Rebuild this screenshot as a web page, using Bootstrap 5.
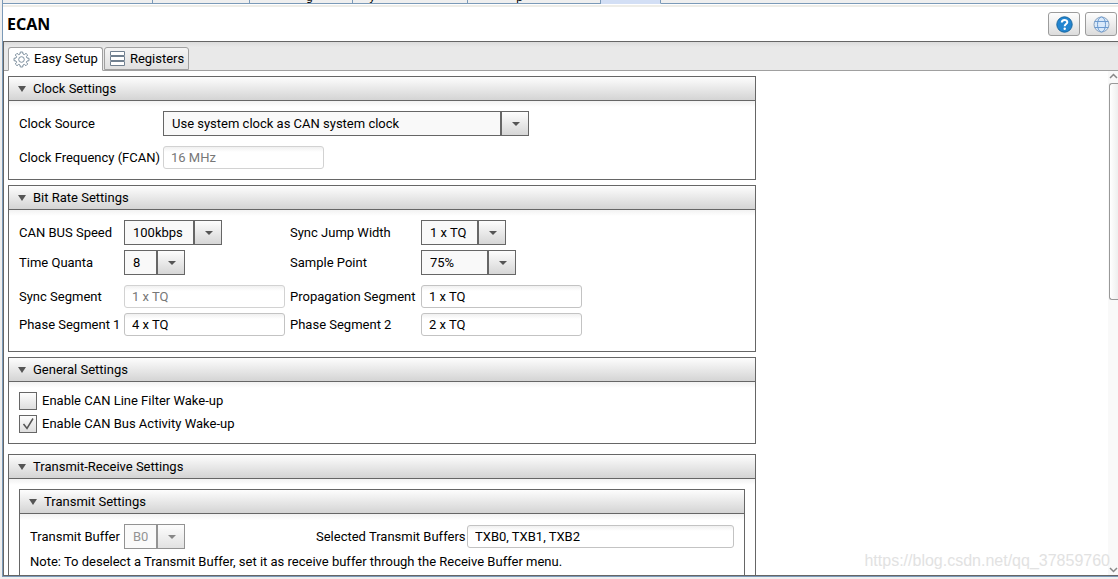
<!DOCTYPE html>
<html lang="en">
<head>
<meta charset="utf-8">
<meta name="viewport" content="width=device-width, initial-scale=1">
<title>ECAN</title>
<link href="https://cdn.jsdelivr.net/npm/bootstrap@5.3.0/dist/css/bootstrap.min.css" rel="stylesheet">
<style>
  :root { --line: #666; --frame: #7b9ab8; --soft: #c3c3c3; }
  body { font-family: Roboto, "Noto Sans", sans-serif; font-size: 13px; line-height: 18px; color: #000; background: #efefef; }
  .frame { border-left: 1px solid var(--frame); border-bottom: 1px solid var(--frame); margin: 0 0 2px 2px; }

  /* bottom edge of the editor tabs */
  .doc-tabs { height: 4px; background: #efefef; }
  .doc-tab { border-right: 1px solid var(--frame); border-bottom: 1px solid var(--frame); font: 11px/11px "DejaVu Sans", sans-serif; }
  .doc-tab.current { background: #d3dff5; border-bottom-color: #d3dff5; }
  .doc-edge { height: 3px; background: #eeede8; border-top: 1px solid #fff; }

  .title-bar { height: 34px; }
  .title-bar h1 { font: bold 16px/20px "Noto Sans", sans-serif; }
  .tool-btns { gap: 5px; padding-right: 1px; }
  .tool-btn { width: 32px; height: 24px; border: 1px solid #9c9c9c; border-radius: 3px; background: linear-gradient(#fefefe, #dcdcdc); }

  .view { border-left: 1px solid var(--line); border-top: 1px solid var(--line); border-bottom: 1px solid var(--line); }
  .tab-strip { height: 29px; padding-left: 4px; gap: 1px; background: linear-gradient(#dcdcdc, #e9e9e9 5px); border-bottom: 1px solid #a0a0a0; }
  .tab-strip .nav-link { display: flex; align-items: center; gap: 4px; height: 23px; padding: 0 4px; color: #000; border: 1px solid #a0a0a0; border-radius: 3px 3px 0 0; background: linear-gradient(#f4f4f4, #e0e0e0); }
  .tab-strip .nav-link.active { height: 24px; margin-bottom: -1px; border-bottom-color: #fff; background: #fff; }

  .panes { padding: 5px 4px 0; }
  .pane { border: 1px solid var(--line); background: #fff; }
  .pane-head { height: 24px; padding: 0 9px; border: 0; border-bottom: 1px solid var(--line); background: linear-gradient(#fdfdfd, #d4d4d4); text-align: left; color: #000; }
  .pane-head svg { margin-right: 7px; }
  .pane-body { padding: 10px; background: linear-gradient(#f2f2f2, #fff 6px); }
  .settings { max-width: 748px; }
  .gap-above { margin-top: 5px; }
  .gap-above-lg { margin-top: 10px; }

  .fields { display: grid; align-items: center; white-space: nowrap; }
  .fields-clock { grid-template-columns: 144px 1fr; row-gap: 10px; }
  .fields-rate { grid-template-columns: 105px 166px 131px 1fr; row-gap: 5px; }
  .fields-rate + .fields-rate { margin: 10px 0 5px; }
  .fields-buffer { grid-template-columns: 94px 192px 151px 1fr; }

  .pick { appearance: none; height: 25px; padding: 0 36px 0 8px; border: 1px solid var(--line); border-radius: 0; color: #000; font: inherit;
    background:
      url("data:image/svg+xml,%3Csvg xmlns='http://www.w3.org/2000/svg' width='8' height='4'%3E%3Cpath d='M0 0h8L4 4z' fill='%23555'/%3E%3C/svg%3E") no-repeat right 8px center,
      linear-gradient(#fdfdfd, #d6d6d6) no-repeat right / 26px 100%,
      linear-gradient(var(--line), var(--line)) no-repeat right / 28px 100%,
      #f9f9f9; }
  .pick:disabled { opacity: .7; color: #666; }
  .pick-xl { width: 366px; } .pick-lg { width: 98px; } .pick-md { width: 95px; } .pick-sm { width: 85px; } .pick-xs { width: 61px; }

  .entry { width: 161px; height: 23px; padding: 0 7px; border: 1px solid var(--soft); border-radius: 3px; color: #000; font: inherit; background: linear-gradient(#f0f0f0, #fff 5px); }
  .entry:disabled { color: #777; border-color: #d2d2d2; }

  .checks { display: grid; row-gap: 5px; }
  .checks label { display: flex; align-items: center; gap: 5px; }
  .tick { appearance: none; flex: none; width: 18px; height: 18px; margin: 0; border: 1px solid var(--line); background: linear-gradient(#fdfdfd, #dedede); }
  .tick:checked { background: url("data:image/svg+xml,%3Csvg xmlns='http://www.w3.org/2000/svg' width='16' height='16'%3E%3Cpath d='M3.500 8l3.500 4.500 6-10' fill='none' stroke='%23555' stroke-width='1.5'/%3E%3C/svg%3E") center no-repeat, linear-gradient(#fdfdfd, #dedede); }

  .scroller { width: 10px; background: #f9f9f9; }
  .scroller-thumb { height: 217px; margin-left: 1px; border: 1px solid #999; border-right: 0; border-radius: 3px 0 0 3px; background: linear-gradient(90deg, #fff, #eee); }
  .watermark { right: 8px; bottom: 5px; font: 16px/18px "Liberation Sans", sans-serif; color: #e2e2e2; }
</style>
</head>
<body>
<div class="vh-100 d-flex flex-column overflow-hidden">
  <div class="frame flex-grow-1 d-flex flex-column bg-white overflow-hidden">
    <div class="doc-tabs d-flex flex-shrink-0 overflow-hidden">
      <div class="doc-tab" style="width:150px"></div>
      <div class="doc-tab" style="width:97px"></div>
      <div class="doc-tab d-flex align-items-end ps-5" style="width:103px"><span class="ps-2">g</span></div>
      <div class="doc-tab d-flex align-items-end ps-3" style="width:115px">y</div>
      <div class="doc-tab d-flex align-items-end ps-5" style="width:133px">p</div>
      <div class="doc-tab current" style="width:60px"></div>
      <div class="doc-tab flex-grow-1 border-end-0"></div>
    </div>
    <div class="doc-edge flex-shrink-0"></div>

    <header class="title-bar d-flex align-items-center flex-shrink-0 ps-1">
      <h1 class="mb-0 me-auto">ECAN</h1>
      <div class="tool-btns d-flex">
        <button class="tool-btn d-flex align-items-center justify-content-center p-0" type="button" aria-label="Help">
          <svg width="17" height="17" viewBox="0 0 17 17"><circle cx="8.5" cy="8.5" r="7.7" fill="#2385d0" stroke="#17669f"/><path d="M5.8 6.5C5.8 3 11.3 3.200 11.300 6.200C11.300 8 8.700 8.200 8.700 10.200" fill="none" stroke="#fff" stroke-width="2"/><circle cx="8.700" cy="12.700" r="1.200" fill="#fff"/></svg>
        </button>
        <button class="tool-btn d-flex align-items-center justify-content-center p-0" type="button" aria-label="Web">
          <svg width="17" height="17" viewBox="0 0 17 17" fill="#d9e9fa" stroke="#6d9bd0"><circle cx="8.500" cy="8.500" r="7.500" stroke="#8ba3be"/><ellipse cx="8.500" cy="8.500" rx="4" ry="7.500"/><path d="M1.500 5.500h14M1.500 11.500h14" fill="none"/></svg>
        </button>
      </div>
    </header>

    <main class="view flex-grow-1 d-flex flex-column position-relative overflow-hidden">
      <nav class="tab-strip nav d-flex flex-nowrap align-items-end flex-shrink-0">
        <a class="nav-link active" href="#easy">
          <svg width="17" height="17" viewBox="0 0 17 17" fill="none" stroke="#7d8f9e"><path d="M7.300 1h2.400l.3 2 1.300.6L13 2.400 14.700 4l-1.300 1.700.6 1.300 2 .3v2.400l-2 .3-.6 1.300 1.300 1.700-1.700 1.700-1.700-1.300-1.300.6-.3 2H7.300l-.3-2-1.300-.6L4 14.700 2.300 13l1.300-1.700L3 10l-2-.3V7.300L3 7l.6-1.300L2.300 4 4 2.300l1.700 1.300L7 3z" stroke-linejoin="round"/><circle cx="8.500" cy="8.500" r="2.800"/></svg>
          Easy Setup
        </a>
        <a class="nav-link" href="#registers">
          <svg width="17" height="16" viewBox="-1 0 17 16" fill="#fff" stroke="#708090"><path d="M.5.5h14v4H.5zM.5 5.500h14v4H.5zM.5 10.500h14v4H.5z"/></svg>
          Registers
        </a>
      </nav>

      <div class="flex-grow-1 d-flex overflow-hidden">
        <div class="panes flex-grow-1 overflow-hidden" id="easy">
          <div class="settings">
            <section class="pane">
              <button type="button" class="pane-head w-100 d-flex align-items-center"><svg width="8" height="7"><path d="M0 1h8L4 7z" fill="#555"/></svg>Clock Settings</button>
              <div class="pane-body fields fields-clock">
                <label for="src">Clock Source</label>
                <select id="src" class="pick pick-xl"><option>Use system clock as CAN system clock</option></select>
                <label for="fcan">Clock Frequency (FCAN)</label>
                <input id="fcan" class="entry" value="16 MHz" disabled>
              </div>
            </section>

            <section class="pane gap-above">
              <button type="button" class="pane-head w-100 d-flex align-items-center"><svg width="8" height="7"><path d="M0 1h8L4 7z" fill="#555"/></svg>Bit Rate Settings</button>
              <div class="pane-body">
                <div class="fields fields-rate">
                  <label for="speed">CAN BUS Speed</label>
                  <select id="speed" class="pick pick-lg"><option>100kbps</option></select>
                  <label for="jump">Sync Jump Width</label>
                  <select id="jump" class="pick pick-sm"><option>1 x TQ</option></select>
                  <label for="quanta">Time Quanta</label>
                  <select id="quanta" class="pick pick-xs"><option>8</option></select>
                  <label for="sample">Sample Point</label>
                  <select id="sample" class="pick pick-md"><option>75%</option></select>
                </div>
                <div class="fields fields-rate">
                  <label for="sync">Sync Segment</label>
                  <input id="sync" class="entry" value="1 x TQ" disabled>
                  <label for="prop">Propagation Segment</label>
                  <input id="prop" class="entry" value="1 x TQ">
                  <label for="ph1">Phase Segment 1</label>
                  <input id="ph1" class="entry" value="4 x TQ">
                  <label for="ph2">Phase Segment 2</label>
                  <input id="ph2" class="entry" value="2 x TQ">
                </div>
              </div>
            </section>

            <section class="pane gap-above">
              <button type="button" class="pane-head w-100 d-flex align-items-center"><svg width="8" height="7"><path d="M0 1h8L4 7z" fill="#555"/></svg>General Settings</button>
              <div class="pane-body checks">
                <label><input type="checkbox" class="tick">Enable CAN Line Filter Wake-up</label>
                <label><input type="checkbox" class="tick" checked>Enable CAN Bus Activity Wake-up</label>
              </div>
            </section>

            <section class="pane gap-above-lg">
              <button type="button" class="pane-head w-100 d-flex align-items-center"><svg width="8" height="7"><path d="M0 1h8L4 7z" fill="#555"/></svg>Transmit-Receive Settings</button>
              <div class="pane-body">
                <section class="pane">
                  <button type="button" class="pane-head w-100 d-flex align-items-center"><svg width="8" height="7"><path d="M0 1h8L4 7z" fill="#555"/></svg>Transmit Settings</button>
                  <div class="pane-body">
                    <div class="fields fields-buffer">
                      <label for="buf">Transmit Buffer</label>
                      <select id="buf" class="pick pick-xs" disabled><option>B0</option></select>
                      <label for="sel">Selected Transmit Buffers</label>
                      <input id="sel" class="entry w-100" value="TXB0, TXB1, TXB2">
                    </div>
                    <p class="mt-1 mb-5">Note: To deselect a Transmit Buffer, set it as receive buffer through the Receive Buffer menu.</p>
                  </div>
                </section>
              </div>
            </section>
          </div>
        </div>

        <div class="scroller flex-shrink-0 d-flex flex-column">
          <svg class="flex-shrink-0" width="10" height="12"><path d="M2 7l3.500-3.500L9 7" fill="none" stroke="#888" stroke-width="1.500"/></svg>
          <div class="scroller-thumb"></div>
          <svg class="mt-auto flex-shrink-0" width="10" height="10"><path d="M2 3l3.500 3.500L9 3" fill="none" stroke="#888" stroke-width="1.500"/></svg>
        </div>
      </div>
      <div class="watermark position-absolute">https://blog.csdn.net/qq_37859760</div>
    </main>
  </div>
</div>
<script src="https://cdn.jsdelivr.net/npm/bootstrap@5.3.0/dist/js/bootstrap.bundle.min.js"></script>
</body>
</html>
